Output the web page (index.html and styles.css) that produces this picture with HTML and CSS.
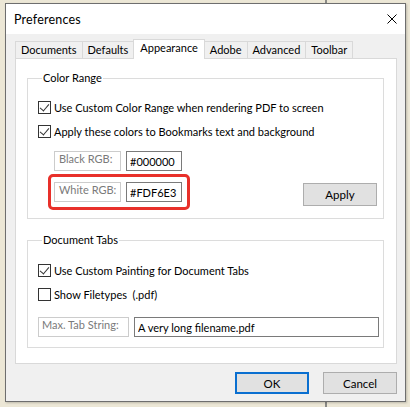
FILE: index.html
```html
<!DOCTYPE html>
<html lang="en">
<head>
    <meta charset="UTF-8">
    <title>Preferences</title>
    <link rel="stylesheet" href="styles.css">
</head>
<body>
    <div class="dialog">
        <div class="titlebar">
            <span class="title">Preferences</span>
            <button class="close" aria-label="Close">
                <svg width="10" height="10" viewBox="0 0 10 10"><path d="M0.5 0.5L9.5 9.5M9.5 0.5L0.5 9.5" stroke="#000" stroke-width="1" fill="none"/></svg>
            </button>
        </div>
        <div class="body">
            <div class="tabs">
                <div class="tab">Documents</div>
                <div class="tab">Defaults</div>
                <div class="tab active">Appearance</div>
                <div class="tab">Adobe</div>
                <div class="tab">Advanced</div>
                <div class="tab">Toolbar</div>
            </div>
            <div class="panel">
                <fieldset class="group color-range">
                    <legend>Color Range</legend>
                    <label class="check first"><input type="checkbox" checked><span>Use Custom Color Range when rendering PDF to screen</span></label>
                    <label class="check"><input type="checkbox" checked><span>Apply these colors to Bookmarks text and background</span></label>
                    <div class="rgb-row black-row">
                        <span class="field-label rgb-label">Black RGB:</span>
                        <input class="field rgb-field" type="text" value="#000000">
                    </div>
                    <div class="apply-row">
                        <div class="rgb-row highlight">
                            <span class="field-label rgb-label">White RGB:</span>
                            <input class="field rgb-field" type="text" value="#FDF6E3">
                        </div>
                        <button class="btn apply">Apply</button>
                    </div>
                </fieldset>
                <fieldset class="group doc-tabs">
                    <legend>Document Tabs</legend>
                    <label class="check first"><input type="checkbox" checked><span>Use Custom Painting for Document Tabs</span></label>
                    <label class="check"><input type="checkbox"><span>Show Filetypes&nbsp; (.pdf)</span></label>
                    <div class="tab-string-row">
                        <span class="field-label tab-string-label">Max. Tab String:</span>
                        <input class="field tab-string-field" type="text" value="A very long filename.pdf">
                    </div>
                </fieldset>
            </div>
            <div class="buttons">
                <button class="btn default">OK</button>
                <button class="btn">Cancel</button>
            </div>
        </div>
    </div>
</body>
</html>
```

FILE: styles.css
```css
* {
    box-sizing: border-box;
}
body {
    margin: 0;
    height: 407px;
    overflow: hidden;
    font-family: Lato, "Noto Sans", sans-serif;
    font-size: 11px;
    color: #000;
    background: linear-gradient(to right, transparent 325px, #8a8a86 325px, #8a8a86 327px, transparent 327px), #ece7d6;
}
.dialog {
    margin: 3px 0 0 5px;
    width: 401px;
    height: 399px;
    border: 1px solid #6e6e6e;
    background: #f0f0f0;
    box-shadow: 1px 1px 2px rgba(0, 0, 0, 0.2);
}
.titlebar {
    height: 30px;
    background: #fff;
    display: flex;
    align-items: center;
    justify-content: space-between;
    padding: 0 8px;
}
.title {
    font-size: 12.5px;
    letter-spacing: 0.2px;
}
.close {
    width: 10px;
    height: 10px;
    padding: 0;
    border: none;
    background: none;
    display: flex;
}
.body {
    padding: 5px 8px 0 9px;
}
.tabs {
    display: flex;
    align-items: flex-end;
    height: 19px;
}
.tab {
    height: 17px;
    line-height: 15px;
    padding: 0 5px;
    border: 1px solid #d9d9d9;
    border-bottom: none;
    background: #f0f0f0;
    margin-left: -1px;
    white-space: nowrap;
}
.tab:first-child {
    margin-left: 0;
}
.tab.active {
    height: 20px;
    line-height: 16px;
    background: #fff;
    margin-bottom: -1px;
    position: relative;
    z-index: 1;
    padding: 0 6px;
}
.panel {
    height: 306px;
    background: #fff;
    border: 1px solid #d9d9d9;
    padding: 0 12px 0 11px;
}
.group {
    margin: 0;
    border: 1px solid #dcdcdc;
    padding: 0 6px 0 10px;
    min-width: 0;
}
.group legend {
    line-height: 16px;
    padding: 0 1px;
    margin-left: 4px;
}
.color-range {
    margin-top: 11px;
    padding-top: 13px;
    padding-bottom: 8px;
}
.doc-tabs {
    margin-top: 13px;
    padding-top: 14px;
    padding-bottom: 10px;
    padding-right: 4px;
}
.check {
    display: flex;
    align-items: center;
    gap: 3px;
    height: 17px;
    margin-top: 7px;
    white-space: nowrap;
}
.check.first {
    margin-top: 0;
}
.check input {
    appearance: none;
    -webkit-appearance: none;
    margin: 0;
    width: 13px;
    height: 13px;
    border: 1px solid #333;
    background: #fff;
    position: relative;
    flex: none;
}
.check input:checked::after {
    content: "";
    position: absolute;
    left: 3px;
    top: 0px;
    width: 4px;
    height: 8px;
    border-right: 1px solid #333;
    border-bottom: 1px solid #333;
    transform: rotate(40deg);
}
.rgb-row,
.tab-string-row {
    display: flex;
    gap: 5px;
}
.black-row {
    margin: 11px 0 0 16px;
}
.apply-row {
    display: flex;
    align-items: flex-end;
    justify-content: space-between;
    margin-top: 3px;
}
.highlight {
    margin-left: 10px;
    border: 3px solid #e8302a;
    border-radius: 5px;
    padding: 5px 5px 5px 3px;
}
.field-label,
.field {
    height: 20px;
    line-height: 18px;
    font: inherit;
}
.field-label {
    border: 1px solid #cccccc;
    color: #7a7a7a;
    padding: 0 4px;
    white-space: nowrap;
}
.field {
    border: 1px solid #7a7a7a;
    padding: 0 3px;
    color: #000;
    outline: none;
}
.rgb-label {
    width: 67px;
}
.rgb-field {
    width: 56px;
}
.tab-string-row {
    margin-top: 14px;
}
.tab-string-label {
    width: 91px;
    padding: 0 3px;
}
.tab-string-field {
    width: 245px;
}
.btn {
    font: inherit;
    font-size: 11.5px;
    width: 74px;
    height: 22px;
    padding: 0;
    background: #e1e1e1;
    border: 1px solid #adadad;
    color: #000;
}
.apply {
    height: 23px;
    margin-bottom: 4px;
}
.buttons {
    display: flex;
    justify-content: flex-end;
    gap: 14px;
    margin-top: 8px;
}
.btn.default {
    border: 2px solid #0a6fd0;
}
```
